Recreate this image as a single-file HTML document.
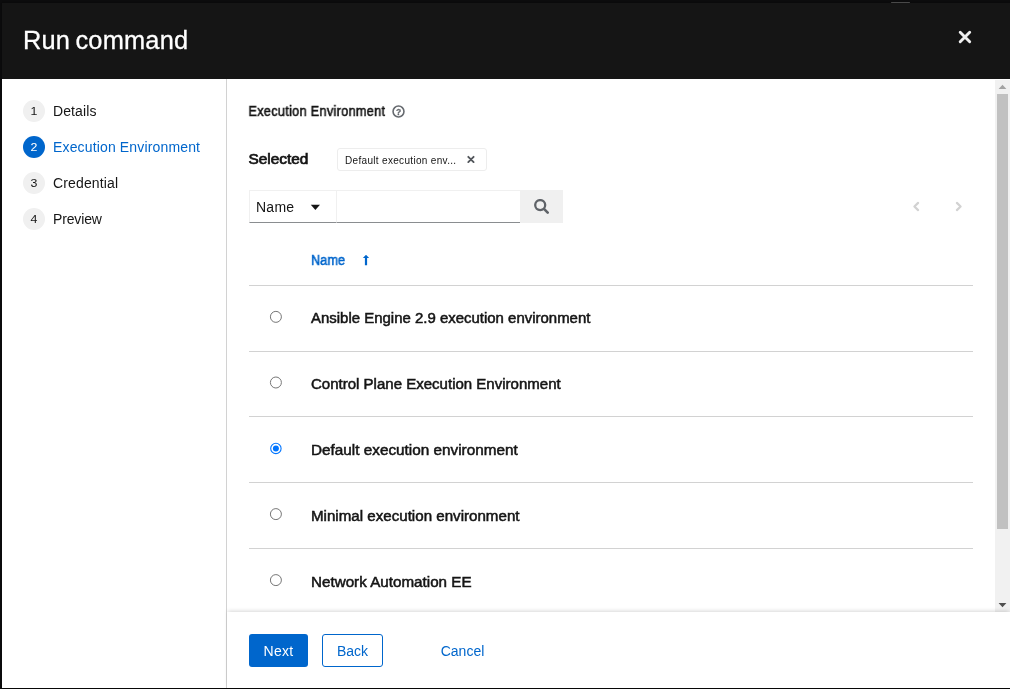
<!DOCTYPE html>
<html lang="en">
<head>
<meta charset="utf-8">
<title>Run command</title>
<style>
html,body{margin:0;padding:0;}
body{width:1010px;height:689px;overflow:hidden;background:#0c0c0d;font-family:"Liberation Sans",sans-serif;color:#151515;position:relative;}
.abs{position:absolute;}
.t{position:absolute;white-space:nowrap;line-height:1;}
.t,.num,.btn,svg{will-change:transform;}
#peek{left:891px;top:2px;width:19px;height:1px;background:#555;border-radius:1px;}
#modal{left:2px;top:3px;width:1008px;height:685px;background:#fff;box-shadow:0 0 1.5px 0.5px #000;}
#header{left:2px;top:3px;width:1008px;height:76px;background:#151515;}
#title{left:23px;top:28px;font-size:25.4px;color:#fff;letter-spacing:.2px;word-spacing:-2px;-webkit-text-stroke:.3px #fff;}
#side-border{left:226px;top:79px;width:1px;height:609px;background:#d2d2d2;}
.num{position:absolute;left:23px;width:22px;height:22px;border-radius:50%;background:#f0f0f0;color:#151515;font-size:10.5px;line-height:22px;text-align:center;}
.num.cur{background:#0066cc;color:#fff;}
.nav{left:53px;font-size:14px;}
.nav.cur{color:#0066cc;}
.hline{position:absolute;left:249px;width:724px;height:1px;background:#d2d2d2;}
.row{left:311px;font-size:14px;font-weight:400;-webkit-text-stroke:.5px #151515;transform-origin:0 0;}
#footer{left:227px;top:612px;width:783px;height:76px;background:#fff;box-shadow:0 -2px 4px -1px rgba(3,3,3,.16);}
.btn{position:absolute;top:634px;height:33px;border-radius:3px;box-sizing:border-box;font-size:14px;line-height:35px;text-align:center;}
#sb-track{left:995px;top:80px;width:15px;height:532px;background:#f1f1f1;}
#sb-thumb{left:997px;top:94px;width:11px;height:435px;background:#c1c1c1;}
</style>
</head>
<body>
<div class="abs" id="peek"></div>
<div class="abs" id="modal"></div>
<div class="abs" id="header"></div>
<div class="t" id="title">Run command</div>
<svg class="abs" style="left:958px;top:30px" width="14" height="14" viewBox="0 0 14 14"><path d="M2.2 2.3 L11.7 11.8 M11.7 2.3 L2.2 11.8" stroke="#f0f0f0" stroke-width="2.9" stroke-linecap="round" fill="none"/></svg>

<div class="abs" id="side-border"></div>
<div class="num" style="top:100px"><span style="display:inline-block;transform:scaleX(1.18)">1</span></div><div class="t nav" style="top:104px;letter-spacing:.1px">Details</div>
<div class="num cur" style="top:136px"><span style="display:inline-block;transform:scaleX(1.18)">2</span></div><div class="t nav cur" style="top:140px;letter-spacing:.15px">Execution Environment</div>
<div class="num" style="top:172px"><span style="display:inline-block;transform:scaleX(1.18)">3</span></div><div class="t nav" style="top:176px;letter-spacing:.14px">Credential</div>
<div class="num" style="top:208px"><span style="display:inline-block;transform:scaleX(1.18)">4</span></div><div class="t nav" style="top:212px;letter-spacing:-.14px">Preview</div>

<div class="t" id="lbl" style="left:248px;top:104px;font-size:14px;font-weight:400;-webkit-text-stroke:.55px #151515;letter-spacing:.35px;transform:translateX(.4px) scaleX(.905);transform-origin:0 0;">Execution Environment</div>
<svg class="abs" style="left:392px;top:105px" width="13" height="13" viewBox="0 0 13 13"><circle cx="6.5" cy="6.5" r="5.45" fill="none" stroke="#666a6f" stroke-width="1.6"/><text x="6.6" y="9.5" font-size="8.5" font-weight="700" stroke="#666a6f" stroke-width=".3" text-anchor="middle" fill="#666a6f" font-family="Liberation Sans, sans-serif">?</text></svg>

<div class="t" id="sel" style="left:248px;top:152px;font-size:14px;font-weight:400;-webkit-text-stroke:.7px #151515;transform:translate(.5px,.2px) scaleX(1.1);transform-origin:0 0;">Selected</div>
<div class="abs" id="chip" style="left:337px;top:148px;width:150px;height:23px;box-sizing:border-box;border:1px solid #ededed;border-radius:3px;background:#fff;"></div>
<div class="t" id="chiptext" style="left:345px;top:156px;font-size:10px;letter-spacing:.32px;color:#151515;">Default execution env...</div>
<svg class="abs" style="left:466px;top:154px" width="10" height="10" viewBox="0 0 10 10"><path d="M2.3 2.8 L7.6 8.1 M7.6 2.8 L2.3 8.1" stroke="#53575c" stroke-width="1.9" stroke-linecap="round" fill="none"/></svg>

<div class="abs" id="dd" style="left:249px;top:190px;width:88px;height:33px;box-sizing:border-box;border:1px solid #f0f0f0;border-bottom:1px solid #8a8d90;background:#fff;"></div>
<div class="t" style="left:256px;top:200px;font-size:14px;letter-spacing:.25px;">Name</div>
<svg class="abs" style="left:310px;top:204px" width="11" height="7" viewBox="0 0 11 7"><path d="M0.8 0.7 H10 L5.4 6.1 Z" fill="#151515"/></svg>
<div class="abs" id="inp" style="left:337px;top:190px;width:183px;height:33px;box-sizing:border-box;border:1px solid #f0f0f0;border-left:0;border-right:0;border-bottom:1px solid #8a8d90;background:#fff;"></div>
<div class="abs" id="sbtn" style="left:520px;top:190px;width:43px;height:33px;background:#f0f0f0;"></div>
<svg class="abs" style="left:534px;top:199px" width="15" height="15" viewBox="0 0 15 15"><circle cx="6.2" cy="6.1" r="5" fill="none" stroke="#5f6368" stroke-width="2.3"/><path d="M10 9.9 L13.7 13.6" stroke="#5f6368" stroke-width="2.6" stroke-linecap="round"/></svg>

<svg class="abs" style="left:912px;top:201px" width="8" height="11" viewBox="0 0 8 11"><path d="M6.1 1.9 L2.4 5.5 L6.1 9.1" stroke="#d2d2d2" stroke-width="2.2" fill="none" stroke-linecap="round" stroke-linejoin="round"/></svg>
<svg class="abs" style="left:955px;top:201px" width="8" height="11" viewBox="0 0 8 11"><path d="M1.9 1.9 L5.6 5.5 L1.9 9.1" stroke="#d2d2d2" stroke-width="2.2" fill="none" stroke-linecap="round" stroke-linejoin="round"/></svg>

<div class="t" id="th" style="left:311px;top:253px;font-size:14px;font-weight:400;-webkit-text-stroke:.55px #0066cc;color:#0066cc;transform:scaleX(.912);transform-origin:0 0;">Name</div>
<svg class="abs" style="left:362px;top:255px" width="8" height="11" viewBox="0 0 8 11"><path d="M4 -0.2 L7.1 3 H5.1 V10.3 H2.9 V3 H0.9 Z" fill="#0066cc"/></svg>

<div class="hline" style="top:285px"></div>
<div class="hline" style="top:351px"></div>
<div class="hline" style="top:416px"></div>
<div class="hline" style="top:482px"></div>
<div class="hline" style="top:548px"></div>

<svg class="abs" style="left:266px;top:306px" width="20" height="20" viewBox="0 0 20 20"><circle cx="9.9" cy="10.85" r="5.5" fill="#fff" stroke="#767676" stroke-width="1"/></svg><div class="t row" style="top:311px;transform:scaleX(1.0684)">Ansible Engine 2.9 execution environment</div>
<svg class="abs" style="left:266px;top:372px" width="20" height="20" viewBox="0 0 20 20"><circle cx="9.9" cy="10.50" r="5.5" fill="#fff" stroke="#767676" stroke-width="1"/></svg><div class="t row" style="top:377px;transform:scaleX(1.0731)">Control Plane Execution Environment</div>
<svg class="abs" style="left:266px;top:438px" width="20" height="20" viewBox="0 0 20 20"><circle cx="9.9" cy="10.45" r="5.2" fill="#fff" stroke="#0075ff" stroke-width="1.1"/><circle cx="9.9" cy="10.45" r="3" fill="#0075ff"/></svg><div class="t row" style="top:443px;transform:scaleX(1.093)">Default execution environment</div>
<svg class="abs" style="left:266px;top:504px" width="20" height="20" viewBox="0 0 20 20"><circle cx="9.9" cy="10.10" r="5.5" fill="#fff" stroke="#767676" stroke-width="1"/></svg><div class="t row" style="top:509px;transform:scaleX(1.0804)">Minimal execution environment</div>
<svg class="abs" style="left:266px;top:570px" width="20" height="20" viewBox="0 0 20 20"><circle cx="9.9" cy="10.10" r="5.5" fill="#fff" stroke="#767676" stroke-width="1"/></svg><div class="t row" style="top:575px;transform:scaleX(1.0862)">Network Automation EE</div>

<div class="abs" id="sb-track"></div>
<div class="abs" id="sb-thumb"></div>
<svg class="abs" style="left:998px;top:84px" width="9" height="6" viewBox="0 0 9 6"><path d="M4.5 0.8 L8.4 5 H0.6 Z" fill="#a3a3a3"/></svg>
<svg class="abs" style="left:998px;top:602px" width="9" height="6" viewBox="0 0 9 6"><path d="M4.5 5.2 L8.4 1 H0.6 Z" fill="#505050"/></svg>

<div class="abs" id="footer"></div>
<div class="btn" style="left:249px;width:59px;background:#0066cc;color:#fff;letter-spacing:.3px;">Next</div>
<div class="btn" style="left:322px;width:61px;border:1px solid #0066cc;color:#0066cc;line-height:33px;">Back</div>
<div class="btn" style="left:425px;width:75px;color:#0066cc;">Cancel</div>
</body>
</html>
